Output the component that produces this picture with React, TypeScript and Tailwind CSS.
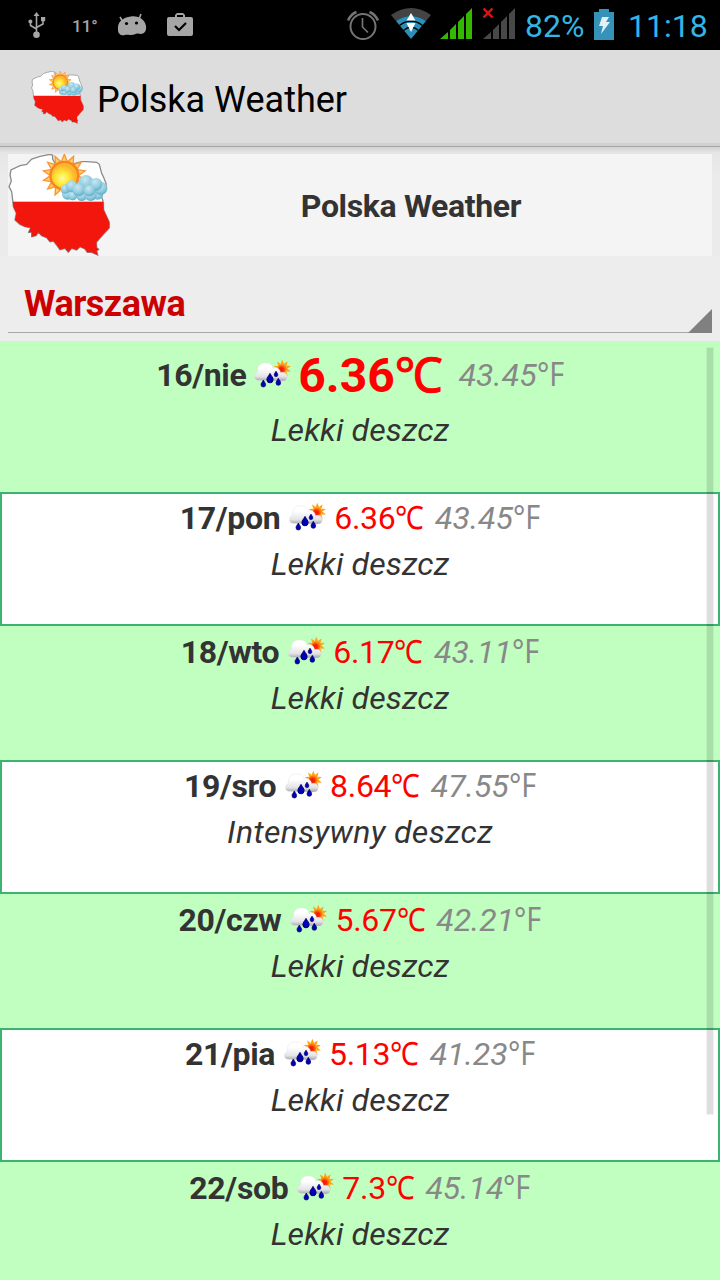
import React from "react";

type Day = { date: string; c: string; f: string; text: string };

const days: Day[] = [
  { date: "16/nie", c: "6.36", f: "43.45", text: "Lekki deszcz" },
  { date: "17/pon", c: "6.36", f: "43.45", text: "Lekki deszcz" },
  { date: "18/wto", c: "6.17", f: "43.11", text: "Lekki deszcz" },
  { date: "19/sro", c: "8.64", f: "47.55", text: "Intensywny deszcz" },
  { date: "20/czw", c: "5.67", f: "42.21", text: "Lekki deszcz" },
  { date: "21/pia", c: "5.13", f: "41.23", text: "Lekki deszcz" },
  { date: "22/sob", c: "7.3", f: "45.14", text: "Lekki deszcz" },
];

const outline =
  "M30 90 33 75 60 62 80 58 95 42 120 34 150 28 158 31 158 42 165 55 200 62 245 50 260 50 290 52 298 58 305 85 312 100 318 115 319 130 308 145 305 155 310 172 311 195 328 232 328 248 310 268 289 292 290 308 296 313 290 318 293 330 275 322 262 322 255 312 240 305 230 315 215 310 205 322 195 310 180 314 170 300 160 288 150 290 140 278 125 272 115 262 108 272 95 275 95 262 86 262 92 248 75 245 60 238 45 225 49 205 40 185 38 165 35 140 27 125 34 108Z";

const lumps = [
  [293, 148, 16],
  [245, 152, 16],
  [203, 147, 17],
  [218, 152, 14],
  [272, 150, 18],
  [302, 130, 20],
  [196, 132, 14],
  [215, 124, 18],
  [258, 112, 22],
  [288, 118, 19],
  [236, 134, 19],
  [268, 137, 17],
];

function PolandIcon({ className, id }: { className: string; id: string }) {
  const rays = Array.from({ length: 14 }, (_, i) => (i * 360) / 14);
  return (
    <svg viewBox="24 27 306 306" className={className}>
      <defs>
        <clipPath id={id + "c"}>
          <path d={outline} />
        </clipPath>
        <radialGradient id={id + "s"} cx="0.42" cy="0.6">
          <stop offset="0" stopColor="#fffb9a" />
          <stop offset="0.5" stopColor="#ffe838" />
          <stop offset="1" stopColor="#fdb52c" />
        </radialGradient>
        <radialGradient id={id + "k"} cx="0.42" cy="0.3" r="0.8">
          <stop offset="0" stopColor="#c6e8f2" />
          <stop offset="0.55" stopColor="#92ccdf" />
          <stop offset="1" stopColor="#4ba3c1" />
        </radialGradient>
      </defs>
      <path d={outline} fill="#fff" stroke="#8c8c8c" strokeWidth="4" />
      <g clipPath={`url(#${id}c)`}>
        <rect x="20" y="170" width="320" height="170" fill="#f2160c" />
      </g>
      {rays.map((a) => (
        <path
          key={a}
          d="M184 50 193 28 202 50Z"
          fill="#ffd35e"
          stroke="#f8953a"
          strokeWidth="4"
          transform={`rotate(${a} 193 92)`}
        />
      ))}
      <circle cx="193" cy="92" r="45" fill="#f9841f" />
      <circle cx="193" cy="92" r="38" fill={`url(#${id}s)`} />
      {lumps.map(([x, y, r]) => (
        <circle key={x} cx={x} cy={y} r={r} fill={`url(#${id}k)`} />
      ))}
    </svg>
  );
}

function RainIcon({ id }: { id: string }) {
  const rays = Array.from({ length: 10 }, (_, i) => i * 36);
  const drop = "M0-11C3-5 7-2 7 3A7 7 0 0 1-7 3C-7-2-3-5 0-11Z";
  return (
    <svg viewBox="36 24 120 96" className="h-8 w-10 shrink-0">
      <defs>
        <linearGradient id={id} x1="0" y1="0" x2="0" y2="1">
          <stop offset="0.3" stopColor="#ffffff" />
          <stop offset="0.75" stopColor="#e4e4e8" />
          <stop offset="1" stopColor="#a4a4ac" />
        </linearGradient>
        <radialGradient id={id + "r"} cx="0.4" cy="0.6">
          <stop offset="0.4" stopColor="#fa1c08" />
          <stop offset="1" stopColor="#ff8a08" />
        </radialGradient>
      </defs>
      {rays.map((a) => (
        <path key={a} d="M119 42 124 29 129 42Z" fill="#ffa310" transform={`rotate(${a} 124 56)`} />
      ))}
      <circle cx="124" cy="56" r="14" fill={`url(#${id}r)`} />
      <path
        d="M52 91C38 91 36 72 50 66C46 48 61 36 75 39C88 37 96 48 96 56C105 48 117 56 119 68C132 64 141 74 138 84C136 93 128 93 120 93Z"
        fill={`url(#${id})`}
        stroke="#d8d8de"
        strokeWidth="1"
      />
      <g fill="#0000b8" stroke="#000060" strokeWidth="2">
        <path d={drop} transform="translate(67 101)" />
        <path d={drop} transform="translate(87 85) scale(1.35)" />
        <path d={drop} transform="translate(105 72) scale(.8)" />
        <path d={drop} transform="translate(112 96)" />
      </g>
    </svg>
  );
}

function Signal({ color }: { color: string }) {
  return (
    <svg viewBox="0 0 32 32" className="h-8 w-8" fill={color}>
      <path d="M0 31 8 24V31ZM10 22 16 16V31H10ZM18 14 24 8V31H18ZM26 6 32 0V31H26Z" />
    </svg>
  );
}

function StatusBar() {
  return (
    <div className="flex h-[50px] shrink-0 items-start bg-black text-[#33b5e5]">
      <svg viewBox="0 0 18 26" className="ml-7 mt-3 h-[26px] w-[18px]" fill="none" stroke="#a6a6a6" strokeWidth="1.6">
        <path d="M8.500 3V22M8.500 17 2.500 13.500V10M8.500 15.500 15 12V8" />
        <path d="M8.500 0 11.500 4H5.500Z" fill="#a6a6a6" stroke="none" />
        <circle cx="8.500" cy="22.700" r="3.300" fill="#a6a6a6" stroke="none" />
        <circle cx="2.400" cy="9.500" r="2" fill="#a6a6a6" stroke="none" />
        <rect x="13" y="5" width="4.200" height="4.200" fill="#a6a6a6" stroke="none" />
      </svg>
      <span className="ml-[26px] mt-[14px] w-[45px] text-[17px] font-medium leading-6 text-[#a6a6a6]">11°</span>
      <svg viewBox="0 0 30 24" className="mt-[13px] h-6 w-[30px]" fill="#a6a6a6">
        <path d="M3 4 6 9M24 1 22 6" stroke="#a6a6a6" strokeWidth="1.600" />
        <path d="M1 17C0 9 6 4 14 3.500C22 2.500 28 7 29 13C30 20 25 22 21 20.500C19 20 18 22 14 22C11 22 10 21.500 8 22C4 23 1 21 1 17Z" />
        <circle cx="9.500" cy="10.500" r="1.600" fill="#000" />
        <circle cx="19.500" cy="10" r="1.600" fill="#000" />
      </svg>
      <svg viewBox="0 0 26 24" className="ml-5 mt-3 h-6 w-[26px]" fill="#a6a6a6">
        <path fillRule="evenodd" d="M8 5V3L10 1H16L18 3V5H24Q26 5 26 7V22Q26 24 24 24H2Q0 24 0 22V7Q0 5 2 5ZM10 5H16V3H10Z" />
        <path d="m8 14 4 4 7-7" fill="none" stroke="#000" strokeWidth="2.200" />
      </svg>
      <svg viewBox="0 0 32 32" className="ml-[154px] mt-[9px] h-8 w-8" fill="none" stroke="#747474" strokeWidth="2">
        <circle cx="16" cy="17.500" r="12.500" />
        <path d="M15.500 9V18L21 23.500" strokeWidth="1.700" />
        <path d="M1 11.500Q4 5 9.500 3M31 11.500Q28 5 22.500 3" strokeWidth="2.400" />
      </svg>
      <svg viewBox="0 0 40 31" className="ml-[12px] mt-2 h-[31px] w-10">
        <path d="M0 7Q20-7 40 7L35 13Q20 3 5 13Z" fill="#444" />
        <path d="M5 13Q20 3 35 13L20 31Z" fill="#2c8fb8" />
        <path d="M8.500 17.500Q20 8.500 31.500 17.500M12.500 22.500Q20 16 27.500 22.500" fill="none" stroke="#000" strokeWidth="1.300" />
        <path d="M20 5 24.500 12.500H15.500ZM20 24 24.500 15H15.500Z" fill="#fff" />
      </svg>
      <div className="ml-[9px] mt-2">
        <Signal color="#35b800" />
      </div>
      <div className="relative ml-[11px] mt-2">
        <Signal color="#484848" />
        <svg viewBox="0 0 10 10" className="absolute left-0 top-0 h-[10px] w-[10px]" stroke="#d81414" strokeWidth="2.400">
          <path d="m.5.5 9 9m0-9-9 9" />
        </svg>
      </div>
      <span className="ml-[10px] mt-1.5 w-[58px] whitespace-nowrap text-[32px] leading-[40px]">82%</span>
      <svg viewBox="0 0 20 31" className="ml-[11px] mt-[9px] h-[31px] w-5">
        <path d="M0 3H5V0H15V3H20V31H0Z" fill="#3592b8" />
        <path d="M8 8H15L12 13H16L7 25 9 17H5Z" fill="#e2f1f7" />
      </svg>
      <span className="ml-[14px] mt-1.5 whitespace-nowrap text-[32px] leading-[40px]">11:18</span>
    </div>
  );
}

function DayRow({ day, index }: { day: Day; index: number }) {
  const first = index === 0;
  const boxed = index % 2 === 1;
  return (
    <div
      className={
        first
          ? "h-[151px] bg-[#c1ffc1] pt-[9px]"
          : boxed
            ? "h-[134px] border-2 border-[#3cb371] bg-white pt-px"
            : "h-[134px] bg-[#c1ffc1] pt-[3px]"
      }
    >
      <div className={first ? "flex h-[57px] items-start justify-center leading-[50px]" : "flex h-[46px] items-start justify-center leading-[46px]"}>
        <span className="font-bold tracking-[-0.35px]">{day.date}</span>
        <span className={first ? "ml-[7px] mt-[8px] flex" : "ml-[8px] mt-[6px] flex"}>
          <RainIcon id={"rain" + index} />
        </span>
        <span
          className={
            first
              ? "ml-[5px] mt-px flex text-[48px] font-bold text-[#f00]"
              : "ml-[6px] flex tracking-[-0.3px] text-[#f00]"
          }
        >
          {day.c}
          {first ? (
            <span className="-translate-y-[2px] font-['Noto_Sans',sans-serif] font-normal [-webkit-text-stroke:1px_#f00]">℃</span>
          ) : (
            <span className="mr-[-3px] origin-left -translate-y-[1.5px] scale-x-90 font-['Noto_Sans',sans-serif]">℃</span>
          )}
        </span>
        <span className={first ? "ml-[16px] flex italic text-[#888]" : "ml-[11px] flex italic text-[#888]"}>
          {day.f}
          <span className="mr-[-3px] origin-left -translate-y-[1.5px] scale-x-90 font-['Noto_Sans',sans-serif] not-italic">°F</span>
        </span>
      </div>
      <div className={day.text.length > 12 ? "text-center italic leading-[46px] tracking-[0.35px]" : "text-center italic leading-[46px] tracking-[0.15px]"}>
        {day.text}
      </div>
    </div>
  );
}

export default function App() {
  return (
    <div className="relative flex h-[1280px] w-[720px] flex-col overflow-hidden bg-[#ededed] font-['Roboto',sans-serif] text-[32px] text-[#333]">
      <StatusBar />
      <header className="flex h-[97px] shrink-0 items-center border-b border-[#a5a5a5] bg-[#ddd] shadow-[inset_0_-3px_0_#d0d0d0]">
        <PolandIcon id="small" className="mb-px ml-[31px] h-[53px] w-[53px]" />
        <h1 className="ml-[13px] pt-1 text-[36px] text-black">Polska Weather</h1>
      </header>
      <div className="h-[109px] shrink-0 bg-linear-to-b from-[#d2d2d2] via-[#e6e6e6] via-[6px] to-[#ebebeb] to-[30px] px-2 pt-[7px]">
        <div className="flex h-[102px] items-center bg-[#f4f4f4]">
          <PolandIcon id="large" className="h-[102px] w-[102px] shrink-0" />
          <div className="flex-1 pt-[2px] text-center text-[32px] font-bold tracking-[-0.35px]">Polska Weather</div>
        </div>
      </div>
      <div className="h-[85px] shrink-0 px-2">
        <div className="relative flex h-[77px] items-center border-b border-[#aaa] pl-4 pt-[20px] text-[36px] font-bold tracking-[-0.5px] text-[#c00]">
          Warszawa
          <svg viewBox="0 0 24 24" className="absolute -bottom-px right-0 h-6 w-6">
            <path d="M0 24 24 0V24Z" fill="#808080" />
          </svg>
        </div>
      </div>
      <main>
        {days.map((d, i) => (
          <DayRow key={d.date} day={d} index={i} />
        ))}
      </main>
      <div className="absolute left-[706px] top-[347px] h-[768px] w-2 border border-black/5 bg-black/13 bg-clip-padding" />
    </div>
  );
}
